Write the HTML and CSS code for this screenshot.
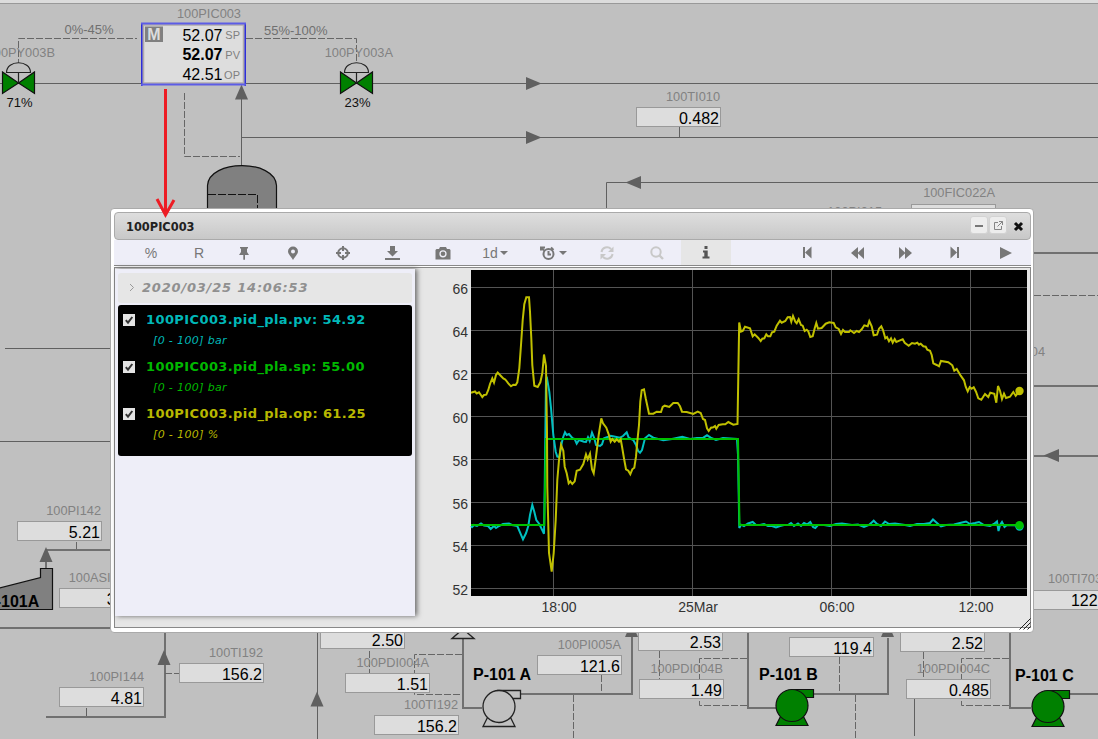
FILE: index.html
```html
<!DOCTYPE html>
<html lang="en">
<head>
<meta charset="utf-8">
<title>100PIC003</title>
<link rel="stylesheet" href="styles.css">
</head>
<body>
<svg class="mimic" width="1098" height="739" viewBox="0 0 1098 739">
  <defs>
    <path id="right" class="arrow" d="M-15.5 -6.5 L0 0 L-15.5 6.5Z"/>
    <path id="left" class="arrow" d="M15.5 -6.5 L0 0 L15.5 6.5Z"/>
    <path id="up" class="arrow" d="M0 0 L6.5 15 L-6.5 15Z"/>
    <g id="valve">
      <path class="green" d="M-16 -11 L0 0 L16 -11 L16 10.5 L0 0 L-16 10.5Z"/>
      <path class="dome" d="M-12 -10.5 C-12 -23.5 12 -23.5 12 -10.5Z M0 -10.5V0"/>
    </g>
    <g id="pump">
      <path d="M-11 10 L-16 20 H16 L11 10Z"/>
      <path d="M0 -16 H21.5 V-8 H13Z"/>
      <circle r="16"/>
    </g>
  </defs>
  <path class="strip" d="M0 0H1098V3H0Z"/>
  <path class="edge" d="M0 3.5H1098"/>

  <g class="line">
    <path d="M0 83.5H141M246 83.5H1098M241.5 98V165M241.5 137.5H1098M679.5 127V137M606.5 209V182.5H1098M5 348.5H110M0 441.5H110M86.5 708V716M317.5 633V739M914.5 699V736"/>
  </g>
  <g class="pipe">
    <path d="M1034 253H1098M1034 386H1098M1034 456H1098M46 568V550H110M0 628H110M165 633V717M46 717H166M463 639V708H482M521 694H633M632 636V694M748 633V708H776M814 694H888V638M1010 633V708H1031M1069 694H1098"/>
  </g>
  <g class="dash">
    <path d="M18.5 66V38.5H137M246 38.5H356.5V66M184.5 93V156.5H240M1034 295.5H1098M76.5 542V549M165 673.5H179M369.5 651V673M462 654.5H414.5V694.5H462M601.5 675V692M573.5 695V739M659.5 651V680M747 658.5H699.5V705.5H747M839.5 657V692M855.5 695V739M923.5 652V679M1009 658.5H961.5V705.5H1009"/>
  </g>
  <use href="#right" x="541.5" y="83.5"/><use href="#right" x="541.5" y="137.5"/>
  <use href="#left" x="625.5" y="182.5"/><use href="#left" x="1043.5" y="455.5"/>
  <use href="#up" x="241.5" y="84.5"/><use href="#up" x="46" y="547"/><use href="#up" x="164" y="650"/><use href="#up" x="317" y="691.5"/>
  <use href="#up" x="631.5" y="622"/><use href="#up" x="887.5" y="622"/>
  <path class="hollow" d="M463 629L474 638.5H452Z"/>
  <use href="#valve" x="18.5" y="83"/><use href="#valve" x="356.5" y="83"/>

  <path class="vessel" d="M207.500 212V185.500C209 159 275 159 276.500 185.500V212"/>
  <path class="vessel-dash" d="M208 194.500H257.500V212"/>
  <path class="vessel" d="M-2 588.500L40.500 577.500V568.500H52.500V609.500H-2Z"/>

  <use href="#pump" class="off" x="499" y="706.500"/>
  <use href="#pump" class="green" x="792" y="705.500"/>
  <use href="#pump" class="green" x="1048" y="706.500"/>

  <g class="box">
    <rect x="636.500" y="107.500" width="84" height="19"/>
    <rect x="911.500" y="204.500" width="84" height="19"/>
    <rect x="1012" y="590.500" width="96" height="19"/>
    <rect x="17.500" y="521.500" width="84" height="19"/>
    <rect x="59.500" y="588.500" width="84" height="19"/>
    <rect x="179.500" y="663.500" width="84" height="19"/>
    <rect x="59.500" y="687.500" width="84" height="19"/>
    <rect x="320.500" y="629.500" width="84" height="19"/>
    <rect x="345.500" y="673.500" width="84" height="19"/>
    <rect x="374.500" y="715.500" width="84" height="19"/>
    <rect x="537.500" y="655.500" width="84" height="19"/>
    <rect x="638.500" y="631.500" width="84" height="19"/>
    <rect x="639.500" y="679.500" width="84" height="19"/>
    <rect x="789.500" y="637.500" width="84" height="19"/>
    <rect x="900.500" y="632.500" width="84" height="19"/>
    <rect x="906.500" y="679.500" width="84" height="19"/>
  </g>
  <g class="tag">
    <text x="241" y="18">100PIC003</text>
    <text x="55" y="57">100PY003B</text>
    <text x="393" y="57">100PY003A</text>
    <text x="720" y="101">100TI010</text>
    <text x="995" y="197">100FIC022A</text>
    <text x="882" y="216">100PI015</text>
    <text x="1045" y="356">100PI004</text>
    <text x="1102" y="583">100TI703</text>
    <text x="101" y="515">100PI142</text>
    <text x="132" y="582">100ASI142</text>
    <text x="263" y="657">100TI192</text>
    <text x="144" y="681">100PI144</text>
    <text x="429" y="667">100PDI004A</text>
    <text x="458" y="709">100TI192</text>
    <text x="621" y="649">100PI005A</text>
    <text x="723" y="673">100PDI004B</text>
    <text x="990" y="673">100PDI004C</text>
  </g>
  <g class="range">
    <text x="64.500" y="34">0%-45%</text>
    <text x="264" y="35">55%-100%</text>
  </g>
  <g class="percent">
    <text x="19.500" y="107">71%</text>
    <text x="357.500" y="107">23%</text>
  </g>
  <g class="value">
    <text x="719" y="124">0.482</text>
    <text x="992" y="219.500">44</text>
    <text x="1111" y="606">122.4</text>
    <text x="100" y="538">5.21</text>
    <text x="138" y="605">3.61</text>
    <text x="262" y="680">156.2</text>
    <text x="142" y="704">4.81</text>
    <text x="403" y="646">2.50</text>
    <text x="428" y="690">1.51</text>
    <text x="457" y="732">156.2</text>
    <text x="620" y="672">121.6</text>
    <text x="721" y="648">2.53</text>
    <text x="722" y="696">1.49</text>
    <text x="872" y="654">119.4</text>
    <text x="983" y="649">2.52</text>
    <text x="989" y="696">0.485</text>
  </g>
  <g class="equipment">
    <text x="-15" y="607">P-101A</text>
    <text x="473" y="680">P-101 A</text>
    <text x="759" y="680">P-101 B</text>
    <text x="1015" y="681">P-101 C</text>
  </g>

  <g class="controller">
    <rect class="face" x="143.500" y="25" width="100" height="58"/>
    <path class="side" d="M141.800 23V86M245.200 23V86"/>
    <path class="rail" d="M141 23.500H246M141 84.500H246"/>
    <rect class="mode" x="145" y="26.500" width="18" height="15.500"/>
    <text class="letter" x="154" y="40">M</text>
    <text class="num" x="222.500" y="41">52.07</text>
    <text class="num bold" x="222.500" y="60">52.07</text>
    <text class="num" x="222.500" y="80">42.51</text>
    <text class="unit" x="240" y="39">SP</text>
    <text class="unit" x="240" y="59">PV</text>
    <text class="unit" x="240" y="79">OP</text>
  </g>
</svg>

<section class="window">
  <header class="titlebar">
    <h1>100PIC003</h1>
    <button class="ctl"><svg width="16" height="16"><path d="M4 8h8v2H4z" fill="#777"/></svg></button>
    <button class="ctl"><svg width="16" height="16" fill="none" stroke="#858585"><path d="M8 5.500H4.500v7h7V9M9 4.500h3.500V8M12.500 4.500L7.500 9.500"/></svg></button>
    <button class="close"><svg width="11" height="11"><path d="M2 2L9 9M9 2L2 9" stroke="#111" stroke-width="3"/></svg></button>
  </header>
  <nav class="toolbar">
    <span class="tool t1">%</span>
    <span class="tool t2">R</span>
    <span class="tool t3"><svg width="12" height="14"><path d="M2 1h8v1.500H9V6l2 3H7v4.500L6 14l-.7-.5V9H1l2-3V2.500H2z"/></svg></span>
    <span class="tool t4"><svg width="12" height="14"><path fill-rule="evenodd" d="M6 .5a5 5 0 0 1 5 5C11 8 7.500 11 6 14 4.500 11 1 8 1 5.500a5 5 0 0 1 5-5zM6 3.500a2 2 0 1 0 0 4 2 2 0 0 0 0-4z"/></svg></span>
    <span class="tool t5"><svg width="14" height="14" class="stroke"><circle cx="7" cy="7" r="4.800"/><path d="M7 0v5M7 9v5M0 7h5M9 7h5"/></svg></span>
    <span class="tool t6"><svg width="15" height="14"><path d="M5 0h5v5h3L7.500 10.500 2 5h3zM0 12h15v2H0z"/></svg></span>
    <span class="tool t7"><svg width="16" height="14"><path fill-rule="evenodd" d="M5 1h6l1 2h2.500l1 1v9.500H.5V4l1-1H4zM8 4.200a3.600 3.600 0 1 0 0 7.200 3.600 3.600 0 0 0 0-7.200z"/><circle cx="8" cy="7.800" r="2.300"/></svg></span>
    <span class="tool t8">1d<i class="caret"></i></span>
    <span class="tool t9"><svg width="15" height="14" class="stroke"><circle cx="8.500" cy="8" r="5"/><path d="M8.500 5V8.500H11M1 4.500V1.500H5M1 1.500L4 4.500M11 1.500L13.500 4"/></svg><i class="caret"></i></span>
    <span class="tool t10 dim"><svg width="14" height="14" class="stroke"><path d="M1.500 6a5.500 5.500 0 0 1 9.500-3M12.500 8a5.500 5.500 0 0 1-9.500 3"/><path class="solid" d="M13.500 .5v5.500H8zM.5 13.500V8h5.500z"/></svg></span>
    <span class="tool t11 dim"><svg width="14" height="14" class="stroke"><circle cx="6" cy="6" r="4.700"/><path d="M9.500 9.500l3.500 3.500" stroke-width="2.400"/></svg></span>
    <span class="tool t12 active"><svg width="8" height="13"><path d="M2.500 0h3v3h-3zM1 4.500h4.700v6H7.500V12.500H.5v-2h1.800v-4H1z"/></svg></span>
    <span class="tool t13"><svg width="10" height="13"><path d="M1 1h2v11H1zM9.500 .5v12L3 6.500z"/></svg></span>
    <span class="tool t14"><svg width="13" height="12"><path d="M7 0v12L0 6zM13 0v12L6.500 6z"/></svg></span>
    <span class="tool t15"><svg width="13" height="12"><path d="M0 0v12l6.500-6zM6 0v12l7-6z"/></svg></span>
    <span class="tool t16"><svg width="10" height="13"><path d="M.5 .5v12L7 6.500zM7 1h2v11H7z"/></svg></span>
    <span class="tool t17"><svg width="12" height="12"><path d="M0 0v12l12-6z"/></svg></span>
  </nav>
  <div class="content">
    <aside class="legend">
      <div class="stamp"><svg width="6" height="9"><path d="M1 1l3.500 3.500L1 8" fill="none" stroke="#999"/></svg>2020/03/25 14:06:53</div>
      <ul class="series">
        <li class="pv"><svg class="check" width="12" height="12"><path d="M2.800 6.200L5 8.700 9.300 3"/></svg><div><b>100PIC003.pid_pla.pv: 54.92</b><em>[0 - 100] bar</em></div></li>
        <li class="sp"><svg class="check" width="12" height="12"><path d="M2.800 6.200L5 8.700 9.300 3"/></svg><div><b>100PIC003.pid_pla.sp: 55.00</b><em>[0 - 100] bar</em></div></li>
        <li class="op"><svg class="check" width="12" height="12"><path d="M2.800 6.200L5 8.700 9.300 3"/></svg><div><b>100PIC003.pid_pla.op: 61.25</b><em>[0 - 100] %</em></div></li>
      </ul>
    </aside>
    <svg class="chart" width="605" height="358" viewBox="425 269 605 358">
      <rect x="471" y="270" width="556" height="326"/>
      <path class="grid" d="M471 287.500H1027M471 330.500H1027M471 373.500H1027M471 416.500H1027M471 459.500H1027M471 502.500H1027M471 545.500H1027M471 588.500H1027M553.500 270V596M692.500 270V596M831.500 270V596M970.500 270V596"/>
      <g class="ylab">
        <text x="468" y="294">66</text><text x="468" y="337">64</text><text x="468" y="380">62</text><text x="468" y="423">60</text>
        <text x="468" y="466">58</text><text x="468" y="509">56</text><text x="468" y="552">54</text><text x="468" y="595">52</text>
      </g>
      <g class="xlab">
        <text x="559" y="612">18:00</text><text x="698" y="612">25Mar</text><text x="837" y="612">06:00</text><text x="976" y="612">12:00</text>
      </g>
      <polyline class="c-pv" points="471,526 472,527 474,525 477,526 481,523.5 484,525.5 488,526 490.700,529 494,526 496,528 499,526 503,524 509,523.500 512,525 517.300,526 520,532.300 523,539.300 526,533.300 528.300,526 530,515 532.300,505 534.300,511.700 536.300,520 539.300,524 541.700,529 544,533.700 544.700,487 546,380 546.700,376.700 549.300,391.700 551,408 553.300,435 555.700,451.700 557.300,456.700 559.300,457 562,441.700 563.300,436.700 565,432.300 566.700,435 569,434 572.700,438.300 574.700,439 576.700,443.700 579,440 584,441.700 586,442 588,437.300 589.700,441 592,432.700 594.300,438.300 596,445 600,446 602,444.300 604,438.300 610.700,435.700 620,437.700 623,436 626.700,432.300 628.700,437.700 633.300,440 636,445 638,450.700 640,452.700 642,450 645,438.300 649,435 653.300,437.700 663.300,440.300 672,439 682.300,436.700 690,439 697,438 703.300,437.700 707,435.300 710.700,437.700 716,440 723,438 737,439 738,455 739.300,528 741,524.700 744,526 748,523.500 752.700,522 756,525 760,525 764,524 768,526 772,526 776,527.500 780,526 784,525 788,525 791,523 794,526 798,523.500 801,526 804,523 807,524.500 810.300,522 813,527 815.300,528 818,525 824,525 830,526 836,524 842,523.500 852,525 858,524.500 864,527 869,525 873.700,520.700 877,524 881,526 885,521.500 889,524 895,523.500 905,525 910,526 917,524 924,524 930,523 933,519.500 937,523 941,526.500 946,525 954,524.500 960,523 966,521.500 970,524 975,523 979,522 984,525 990,526 994,524 997,521.500 998.500,531 1000,525 1002,522 1004.500,527 1007,525 1019.500,525.500"/>
      <circle class="d-pv" cx="1019.500" cy="526.500" r="4.200"/>
      <polyline class="c-sp" points="471,525 544.300,525 546,439 738,439 739.500,525 1019.500,525"/>
      <circle class="d-sp" cx="1019.500" cy="525.300" r="4.200"/>
      <polyline class="c-op" points="471,392.700 475,391.500 476.700,393.500 479,392.300 482.300,397 484,395 486.300,394.700 488.300,390 490,384 492.300,378.300 494,382.500 496,375 497.700,372.500 500.700,375.700 503.300,378.500 505.300,379.500 508.300,383.300 511,386.300 513.300,384.700 515.700,385 517.300,382.300 519.300,368.300 521,345 522.700,320 524.300,304.300 526.300,297.300 529,297.300 530,311.700 531.300,338.300 532.300,365 534.300,385.700 537.700,387 540.300,382.300 542.300,373.300 544,354.500 546,366 547,432 547.300,487 549,553 551.700,571.700 553.700,553 555.700,520 557.300,480 559,460 561,445 563.300,450.700 564.700,466.700 566.700,473.300 568.700,483.300 570.300,481.300 572.300,484 574.700,481.300 576.700,470.700 580,469.700 583.300,464 586,454.300 587.700,459.300 590,453.700 592,469.300 593.700,473.300 596,456.700 598.700,435 601.300,418.300 603,423.300 606.300,427.700 608.700,434.300 610.700,441.700 612.300,439 614.700,441.700 616.700,439.300 619,441.700 620.700,439.300 622.300,448.300 624,458.300 626,469.300 628.300,470.700 630.300,474.300 632.300,469.300 634.300,467.700 636,456.700 637.300,441.700 639,425 640.300,401.700 641.700,390.300 644,389.300 645.700,398.300 649,413.700 653.300,413.700 656.700,411.700 661,412 662.700,407 664.700,405.700 669.300,407 673.300,403 677.700,403 680,406.300 682,411.700 686.700,412 693.300,414 697.700,411.700 700.700,413 703,419 705,420 707,428.300 708.700,431 711,427.700 713.300,427.300 715,426 716.300,428.700 718.700,425 722.700,424.300 725.300,424.300 728.300,422 733.300,424.700 737.500,424 739.200,322.500 741,331.700 742.700,331 745,326.700 750,328.300 752.700,336.300 754.700,334.300 758.300,338 760.700,341 762.300,338.700 764.300,338.300 766.300,334.300 768,336.300 770.300,336.300 772,332.300 774.300,331.700 776.700,325.700 780,320.700 781.700,322.700 785.300,321 787.700,317.300 790,317 791.300,321.700 793,316 795.300,321.700 796.700,323.300 798.700,319.300 801,325 802.700,325.700 804.700,331 806.700,329.700 808.300,331.300 810.300,337 812.700,336.300 814.700,328.300 816.300,323 818,328.700 821.700,328 825.700,323.700 829.300,322.300 833.700,323 835.700,327.300 838.700,329 841,334 843,330 845,332 849,332 850.300,330.300 854,333 856.700,331 859,332 861.700,329.300 864.300,325.300 867.700,326.300 869.300,321 871.700,326.300 873.700,335.300 877,334.700 879,328.700 881.300,326.300 883,330 885.300,338.300 887,337 889,341.300 891,338.300 892.700,342.700 894.700,339 896.300,342 900,340.300 902.700,339.300 904.700,342.700 908.700,345.700 912,343 915,343.700 917.300,342.700 919,344.700 920.700,343.700 923.300,346.300 925.700,346.700 927.300,349.700 930,350.700 931.700,355 933.300,363.300 936.700,365 939,366.300 941,361 948.300,362.300 952.300,365.300 954.300,370.700 956.700,369 960.700,375.700 964,380.300 965.700,386.700 967.700,391.300 969.700,387 971.700,388.700 973.700,387.300 976,391.700 978.300,398.300 981.300,399.700 985,394 988.300,397 990.300,392.700 994.300,393.700 996.300,402.700 998,386 1000,390.700 1002,399 1004,393.700 1006,398 1010,396.700 1013.300,392 1015.700,395.700 1019.500,391"/>
      <circle class="d-op" cx="1019.500" cy="391" r="4.200"/>
    </svg>
  </div>
  <svg class="grip" width="12" height="12"><path d="M.5 11.500L11.500 .5M4.500 11.500L11.500 4.500M8.500 11.500L11.500 8.500"/></svg>
</section>

<svg class="callout" width="24" height="132" viewBox="154 87 24 132"><path d="M165.500 89V214"/><path class="head" d="M157 199L165.500 215L174 200"/></svg>
</body>
</html>
```
FILE: styles.css
```css
body {
  margin: 0;
  width: 1098px;
  height: 739px;
  position: relative;
  overflow: hidden;
  background: #c0c0c0;
  font-family: "Liberation Sans", Arial, sans-serif;
}
svg { display: block; }

/* process mimic */
.strip { fill: #dcdcdc; }
.edge { stroke: #999; }
.line path { fill: none; stroke: #606060; }
.pipe path { fill: none; stroke: #707070; stroke-width: 2; }
.dash path { fill: none; stroke: #666; stroke-dasharray: 7 2; }
.arrow { fill: #606060; }
.hollow { fill: #c0c0c0; stroke: #222; stroke-width: 1.4; }
.green { fill: #008000; stroke: #111; stroke-width: 1.2; }
.off { fill: #c0c0c0; stroke: #222; stroke-width: 1.3; }
.dome { fill: #c0c0c0; stroke: #222; stroke-width: 1.2; }
.vessel { fill: #808080; stroke: #111; stroke-width: 1.2; }
.vessel-dash { fill: none; stroke: #111; stroke-dasharray: 8 2; }
.box rect { fill: #ddd; stroke: #999; }
.tag text { font-size: 12.8px; fill: #828282; text-anchor: end; }
.range text { font-size: 13px; fill: #707070; }
.percent text { font-size: 13px; fill: #111; text-anchor: middle; }
.value text { font-size: 16px; fill: #000; text-anchor: end; }
.equipment text { font-size: 16px; font-weight: bold; fill: #000; }
.face { fill: #ddd; stroke: #b0aaaa; stroke-width: 1.5; }
.side { stroke: #1414dc; stroke-width: 1.3; }
.rail { stroke: #5c5ce6; stroke-width: 2; }
.mode { fill: #808080; }
.letter { font-size: 16px; font-weight: bold; fill: #ddd; text-anchor: middle; }
.num { font-size: 16px; text-anchor: end; }
.bold { font-weight: bold; }
.unit { font-size: 11px; fill: #808080; text-anchor: end; }

/* trend window */
.window {
  position: absolute;
  left: 110px;
  top: 208px;
  width: 924px;
  height: 425px;
  box-sizing: border-box;
  padding: 3px 2px 4px 3px;
  border: 1px solid #aaa;
  border-radius: 4px;
  background: #fff;
  display: flex;
  flex-direction: column;
}
.titlebar {
  height: 28px;
  box-sizing: border-box;
  border: 1px solid #aaa;
  border-radius: 4px;
  background: linear-gradient(#dedede, #c8c8c8);
  display: flex;
  align-items: center;
  padding: 0 6px 0 11px;
}
.titlebar h1 {
  margin: 2px auto 0 0;
  font: bold 11.4px "DejaVu Sans", sans-serif;
  color: #222;
}
.titlebar button {
  padding: 0;
  display: grid;
  place-items: center;
}
.ctl {
  width: 18px;
  height: 18px;
  margin: 0 1px 2px 0;
  border: 1px solid #d3d3d3;
  border-radius: 3px;
  background: #ededed;
}
.close {
  margin-left: 5px;
  border: 0;
  background: none;
}
.toolbar {
  height: 25px;
  flex: none;
  display: flex;
  padding-left: 12px;
  background: #eeeef8;
  border-bottom: 1px solid #888;
}
.tool {
  width: 50px;
  display: flex;
  align-items: center;
  justify-content: center;
  font-size: 14px;
  color: #777;
  flex: none;
}
.tool svg { fill: currentColor; }
.tool .stroke { fill: none; stroke: currentColor; stroke-width: 2; }
.tool .solid { fill: currentColor; stroke: none; }
.toolbar .dim { color: #c8c8c8; }
.toolbar .active { background: #e6e6e6; color: #555; }
.t2 { width: 46px; }
.t3 { width: 43px; }
.t4 { width: 56px; }
.t5 { width: 44px; }
.t6 { width: 55px; }
.t7 { width: 46px; }
.t8, .t9 { width: 58px; }
.t11 { width: 49px; }
.t13 { margin-left: auto; }
.t15 { width: 47px; }
.t16 { width: 52px; }
.caret {
  margin-left: 2px;
  border: 4px solid transparent;
  border-top-color: currentColor;
  border-bottom: 0;
}
.t9 .caret { margin-left: 4px; }
.content {
  flex: 1;
  min-height: 0;
  margin-top: 1px;
  border: 1px solid #888;
  background: #e6e6e6;
  display: flex;
  justify-content: space-between;
  padding-top: 1px;
}
.legend {
  width: 300px;
  height: 347px;
  box-sizing: border-box;
  padding: 4px 3px;
  background: #eeeef8;
  box-shadow: 2px 0 5px #666;
}
.stamp {
  height: 30px;
  box-sizing: border-box;
  border-radius: 3px;
  background: #e6e6e6;
  display: flex;
  align-items: center;
  gap: 7px;
  padding: 0 0 2px 11px;
  font: italic bold 13px "DejaVu Sans", sans-serif;
  letter-spacing: .8px;
  color: #909090;
}
.series {
  list-style: none;
  margin: 2px 0 0;
  height: 151px;
  box-sizing: border-box;
  padding: 6px 0 0 5px;
  border-radius: 3px;
  background: #000;
}
.series li {
  height: 47px;
  display: flex;
  gap: 11px;
}
.check {
  margin-top: 3px;
  background: #e4e4e4;
}
.check path { fill: none; stroke: #333; stroke-width: 2; }
.series b, .series em { display: block; white-space: nowrap; }
.series b { font: bold 13px/18px "DejaVu Sans", sans-serif; letter-spacing: .4px; }
.series em { font: italic 11px/16px "DejaVu Sans", sans-serif; letter-spacing: .36px; margin: 4px 0 0 7px; }
.pv { color: #00b8b8; }
.sp { color: #00b800; }
.op { color: #b8b800; }

.grid { stroke: #545454; }
.ylab text, .xlab text { font-size: 14px; fill: #333; }
.ylab text { text-anchor: end; }
.xlab text { text-anchor: middle; }
.chart polyline { fill: none; stroke-width: 2; }
.c-pv { stroke: #00c0c0; }
.c-sp { stroke: #00c000; }
.c-op { stroke: #c0c000; }
.d-pv { fill: #00c0c0; }
.d-sp { fill: #00c000; }
.d-op { fill: #c0c000; }
.grip {
  position: absolute;
  right: 2px;
  bottom: 2px;
  fill: none;
  stroke: #222;
}

.callout {
  position: absolute;
  left: 154px;
  top: 87px;
  fill: none;
  stroke: #ed1c24;
  stroke-width: 3;
}
```
